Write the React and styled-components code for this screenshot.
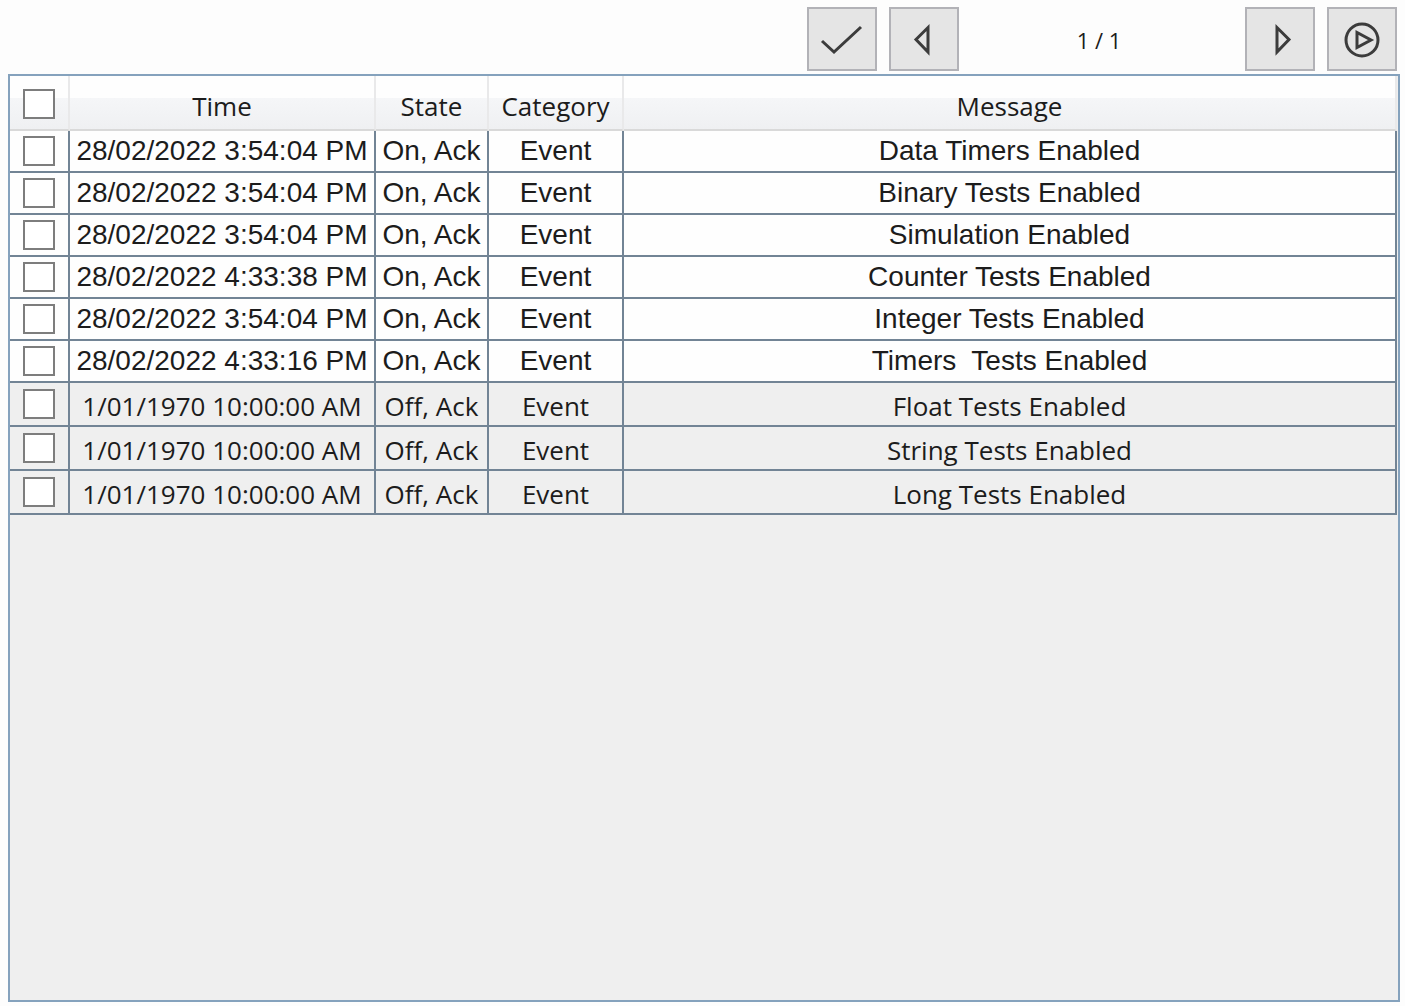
import React, { useState } from "react";
import styled, { createGlobalStyle } from "styled-components";

const GlobalStyle = createGlobalStyle`
  *, *::before, *::after { box-sizing: border-box; }
  body {
    margin: 0;
    background: #fdfdfd;
    color: #1c1c1c;
    font-family: "Open Sans", "Noto Sans", sans-serif;
  }
`;

const Page = styled.main`
  display: flex;
  flex-direction: column;
  min-height: 100vh;
  padding: 7px 5px 4px 8px;
`;

const Toolbar = styled.div`
  display: flex;
  align-items: center;
  justify-content: flex-end;
  gap: 12px;
  padding-right: 3px;
  margin-bottom: 3px;
`;

const ToolButton = styled.button`
  display: flex;
  align-items: center;
  justify-content: center;
  width: 70px;
  height: 64px;
  padding: 0;
  border: 2px solid #b2b2b7;
  background: #e5e5e5;
  color: #3c3c3c;
  cursor: pointer;

  &:hover { background: #dcdcdc; }
`;

const Icon = styled.svg.attrs({ viewBox: "0 0 48 48", "aria-hidden": true })`
  width: 48px;
  height: 48px;
  fill: none;
  stroke: currentColor;
  stroke-width: 3;
`;

const PageCount = styled.output`
  width: 262px;
  padding: 2px 6px 0 0;
  font-size: 22px;
  line-height: 32px;
  text-align: center;
`;

const Panel = styled.section`
  flex: 1;
  padding-right: 1px;
  border: 2px solid #85a2bd;
  background: #efefef;
`;

const Table = styled.table`
  width: 100%;
  table-layout: fixed;
  border-collapse: separate;
  border-spacing: 0;
`;

const Col = styled.col`
  width: ${(p) => p.$width || "auto"};
`;

const HeadCell = styled.th`
  height: 55px;
  padding: ${(p) => (p.$tick ? "2px 0 0" : "6px 0 0")};
  border-right: 2px solid #e9e9ea;
  border-bottom: 2px solid #d9d9d9;
  background: linear-gradient(#fefefe 22px, #f5f6f8 22px, #eff0f2);
  font-size: 26px;
  font-weight: 400;
  line-height: 32px;
  text-align: center;
  vertical-align: middle;
`;

const Row = styled.tr`
  height: ${(p) => (p.$active ? "42px" : "44px")};
  background: ${(p) => (p.$active ? "#fefefe" : "#efefef")};
  font-family: ${(p) =>
    p.$active ? '"Liberation Sans", Arial, sans-serif' : "inherit"};
  font-size: ${(p) => (p.$active ? "28px" : "26px")};
`;

const Cell = styled.td`
  padding: ${(p) => (p.$lowered ? "4px 0 0" : "0")};
  border-right: 2px solid #728495;
  border-bottom: 2px solid #728495;
  line-height: 32px;
  text-align: center;
  vertical-align: middle;
  white-space: pre;
`;

const Tick = styled.input.attrs({ type: "checkbox" })`
  display: block;
  appearance: none;
  width: 32px;
  height: 30px;
  margin: 0 auto;
  border: 2px solid #7d7d7d;
  background: #fff;

  &:checked { box-shadow: inset 0 0 0 5px #fff; background: #3c3c3c; }
`;

const EVENTS = [
  ["28/02/2022 3:54:04 PM", true, "Data Timers Enabled"],
  ["28/02/2022 3:54:04 PM", true, "Binary Tests Enabled"],
  ["28/02/2022 3:54:04 PM", true, "Simulation Enabled"],
  ["28/02/2022 4:33:38 PM", true, "Counter Tests Enabled"],
  ["28/02/2022 3:54:04 PM", true, "Integer Tests Enabled"],
  ["28/02/2022 4:33:16 PM", true, "Timers  Tests Enabled"],
  ["1/01/1970 10:00:00 AM", false, "Float Tests Enabled"],
  ["1/01/1970 10:00:00 AM", false, "String Tests Enabled"],
  ["1/01/1970 10:00:00 AM", false, "Long Tests Enabled"],
];

export default function App() {
  const [picked, setPicked] = useState(EVENTS.map(() => false));
  const toggle = (index) =>
    setPicked(picked.map((value, i) => (i === index ? !value : value)));

  return (
    <>
      <GlobalStyle />
      <Page>
        <Toolbar>
          <ToolButton aria-label="Acknowledge">
            <Icon><path d="M4 26L16 37L43 12" /></Icon>
          </ToolButton>
          <ToolButton aria-label="Previous page">
            <Icon><path d="M28 12.5V37L16 24.5Z" /></Icon>
          </ToolButton>
          <PageCount>1 / 1</PageCount>
          <ToolButton aria-label="Next page">
            <Icon><path d="M21 12.5V37L33 24.5Z" /></Icon>
          </ToolButton>
          <ToolButton aria-label="Live update">
            <Icon>
              <circle cx="24" cy="25" r="16" />
              <path d="M19 17.5V32.5L33 25Z" />
            </Icon>
          </ToolButton>
        </Toolbar>
        <Panel>
          <Table>
            <colgroup>
              <Col $width="60px" />
              <Col $width="306px" />
              <Col $width="113px" />
              <Col $width="135px" />
              <Col />
            </colgroup>
            <thead>
              <tr>
                <HeadCell $tick>
                  <Tick
                    aria-label="Select all"
                    checked={picked.every(Boolean)}
                    onChange={(e) => setPicked(EVENTS.map(() => e.target.checked))}
                  />
                </HeadCell>
                <HeadCell>Time</HeadCell>
                <HeadCell>State</HeadCell>
                <HeadCell>Category</HeadCell>
                <HeadCell>Message</HeadCell>
              </tr>
            </thead>
            <tbody>
              {EVENTS.map(([time, active, message], i) => (
                <Row key={message} $active={active}>
                  <Cell>
                    <Tick
                      aria-label={`Select ${message}`}
                      checked={picked[i]}
                      onChange={() => toggle(i)}
                    />
                  </Cell>
                  <Cell $lowered={!active}>{time}</Cell>
                  <Cell $lowered={!active}>{active ? "On, Ack" : "Off, Ack"}</Cell>
                  <Cell $lowered={!active}>Event</Cell>
                  <Cell $lowered={!active}>{message}</Cell>
                </Row>
              ))}
            </tbody>
          </Table>
        </Panel>
      </Page>
    </>
  );
}
